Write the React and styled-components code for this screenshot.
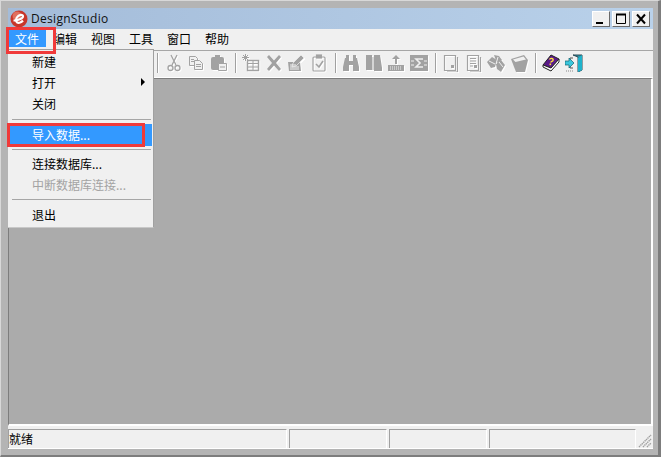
import React from "react";
import styled, { createGlobalStyle } from "styled-components";

const GlobalStyle = createGlobalStyle`
  html, body {
    margin: 0;
    padding: 0;
    background: #b4b4b4;
  }
  * {
    box-sizing: border-box;
  }
`;

const Window = styled.div`
  position: relative;
  width: 661px;
  height: 457px;
  display: flex;
  flex-direction: column;
  overflow: hidden;
  padding: 7px 5px 6px 7px;
  background: #b4b4b4;
  border-top: 1px solid #d8d8d8;
  border-left: 1px solid #d8d8d8;
  border-right: 3px solid #7d7d7d;
  border-bottom: 2px solid #7d7d7d;
  font-family: "Noto Sans CJK SC", "Liberation Sans", sans-serif;
  font-size: 12px;
  color: #000;
`;

const TitleBar = styled.div`
  height: 21px;
  flex: none;
  display: flex;
  align-items: center;
  padding: 0 3px 0 2px;
  background: linear-gradient(90deg, #a4bcd9, #b9d1ea);
`;

const TitleText = styled.span`
  margin-left: 3px;
  font-family: "Open Sans", sans-serif;
  font-size: 12px;
  letter-spacing: 0.3px;
  color: #111;
`;

const Controls = styled.div`
  margin-left: auto;
  display: flex;
  gap: 2px;
`;

const CtrlButton = styled.div`
  width: 18px;
  height: 16px;
  display: flex;
  align-items: center;
  justify-content: center;
  background: #f0f0f0;
  border: 1px solid;
  border-color: #fff #696969 #696969 #fff;
`;

const MenuBar = styled.div`
  height: 21px;
  flex: none;
  display: flex;
  padding-top: 1px;
  background: #f0f0f0;
`;

const MenuItem = styled.div`
  position: relative;
  width: 38px;
  height: 17px;
  line-height: 17px;
  text-align: center;
  background: ${(p) => (p.$active ? "#3399ff" : "transparent")};
  color: ${(p) => (p.$active ? "#fff" : "#000")};
`;

const RedMark = styled.div`
  position: absolute;
  z-index: 5;
  top: ${(p) => p.$top}px;
  left: ${(p) => p.$left}px;
  width: ${(p) => p.$w}px;
  height: ${(p) => p.$h}px;
  border: 3px solid #f03a3a;
`;

const Dropdown = styled.div`
  position: absolute;
  z-index: 3;
  top: 19px;
  left: 0;
  width: 146px;
  height: 179px;
  padding-top: 1px;
  display: flex;
  flex-direction: column;
  background: #f0f0f0;
  border-top: 1px solid #a0a0a0;
  border-right: 1px solid #a0a0a0;
  border-bottom: 1px solid #c8c8c8;
  color: #000;
  text-align: left;
`;

const DropItem = styled.div`
  position: relative;
  flex: none;
  height: ${(p) => p.$h || 21}px;
  line-height: ${(p) => p.$h || 21}px;
  padding-left: ${(p) => (p.$selected ? "22px" : "24px")};
  margin: ${(p) => (p.$selected ? "0 1px 0 2px" : "0")};
  background: ${(p) => (p.$selected ? "#3399ff" : "transparent")};
  color: ${(p) => (p.$selected ? "#fff" : p.$disabled ? "#a3a3a3" : "#000")};
`;

const Arrow = styled.span`
  position: absolute;
  right: 8px;
  top: 6px;
  width: 0;
  height: 0;
  border-left: 4px solid #000;
  border-top: 4px solid transparent;
  border-bottom: 4px solid transparent;
`;

const DropSep = styled.div`
  flex: none;
  height: 1px;
  margin: ${(p) => p.$top}px 2px ${(p) => p.$bottom}px 4px;
  background: #a6a6a6;
`;

const Toolbar = styled.div`
  height: 28px;
  flex: none;
  display: flex;
  align-items: center;
  padding-left: 149px;
  padding-bottom: 2px;
  background: #f0f0f0;
  border-top: 1px solid #a6a6a6;
  border-bottom: 1px solid #fff;
`;

const ToolSep = styled.div`
  width: 1px;
  height: 20px;
  flex: none;
  margin: 0 6.5px 0 ${(p) => p.$ml}px;
  background: #a0a0a0;
  box-shadow: 1px 0 0 #fff;
`;

const ToolIcon = styled.svg`
  width: 18px;
  height: 18px;
  flex: none;
  margin-right: 4.5px;
  filter: ${(p) => (p.$color ? "none" : "drop-shadow(1px 1px 0 #fff)")};
`;

const Client = styled.div`
  flex: 1;
  background: #ababab;
  border-top: 1px solid #7d7d7d;
  border-left: 1px solid #7d7d7d;
  border-right: 2px solid #fff;
  border-bottom: 2px solid #fff;
`;

const StatusBar = styled.div`
  height: 23px;
  flex: none;
  display: flex;
  gap: 2px;
  padding-top: 3px;
  position: relative;
  background: #f0f0f0;
  border-bottom: 1px solid #fff;
`;

const StatusPane = styled.div`
  flex: none;
  width: ${(p) => p.$w}px;
  height: 19px;
  line-height: 18px;
  font-size: 12px;
  border-top: 1px solid #a0a0a0;
  border-left: 1px solid #a0a0a0;
  border-right: 1px solid #fff;
`;

const Grip = styled.svg`
  position: absolute;
  right: 1px;
  bottom: 0;
  width: 14px;
  height: 14px;
`;

const G = "#a2a2a2";

const Logo = () => (
  <svg width="18" height="18" viewBox="0 0 18 18">
    <circle cx="9" cy="9" r="8.5" fill="#c8352a" />
    <circle cx="7" cy="6" r="4.5" fill="#e0705f" />
    <path d="M3.5 10.5C8 10.5 13 8.5 13 6.2C13 4.2 9 4.2 6.8 7.5C5 10.5 6.5 13.5 9.5 12.8C11 12.4 12 11.6 13 10.6" fill="none" stroke="#fff" strokeWidth="2.2" />
  </svg>
);

const icons = [
  // cut
  <g fill="none" stroke={G} strokeWidth="1.3"><path d="M6 1l5 10M12 1L7 11" /><circle cx="5.5" cy="14" r="2.5" /><circle cx="12.5" cy="14" r="2.5" /></g>,
  // copy
  <g fill="#f0f0f0" stroke={G}><path d="M2.5 2.5h6l2 2v7h-8z" /><path d="M7.5 6.5h5l3 3v6h-8z" /><path d="M9 10.5h5M9 12.5h5M4 5.5h3M4 7.5h3" /></g>,
  // paste
  <g><rect x="1" y="3" width="13" height="13" rx="2" fill={G} /><rect x="5" y="1" width="5" height="3" fill={G} /><path d="M8.5 9.5h8v7h-8z" fill="#f0f0f0" stroke={G} /><path d="M10 13h5" stroke={G} /></g>,
  "sep",
  // new table
  <g fill="none" stroke={G}><path d="M1 1l5 5M6 1L1 6M3.5 0v7M0 3.5h7" /><rect x="5.5" y="6.5" width="11" height="10" strokeWidth="1.4" /><path d="M6 9.5h10M11 7v9M6 13h10" /></g>,
  // delete
  <path d="M2 3l2-2 5 5.5L14 1l2 2-5 6 5 6-2 2-5-5.5L4 17l-2-2 5-6z" fill={G} />,
  // edit
  <g><path d="M1 8h12l1 9H2z" fill={G} /><path d="M6 9l8-8 3 3-8 8-4 1z" fill={G} stroke="#f0f0f0" strokeWidth=".7" /><path d="M3 11h6M3 13h9M3 15h9" stroke="#f0f0f0" /></g>,
  // clipboard check
  <g fill="none" stroke={G} strokeWidth="1.2"><rect x="3" y="3" width="12" height="14" rx="1" /><rect x="6.5" y="1" width="5" height="3" fill={G} /><path d="M6 10l3 3 4-6" strokeWidth="1.6" /></g>,
  "sep",
  // binoculars
  <g fill={G}><path d="M3 4h4v3h4V4h4l2 9v4h-6v-6H7v6H1v-4z" /><rect x="4" y="1" width="3" height="3" /><rect x="11" y="1" width="3" height="3" /></g>,
  // books
  <g fill={G}><path d="M1 1h6v15H1z" /><path d="M9 1h6l2 13v3H9z" /><path d="M7 3h2v13H7z" fill="#d5d5d5" /></g>,
  // upload keyboard
  <g fill={G}><path d="M9 1l4 4h-3v5H8V5H5z" /><path d="M1 11h16v6H1z" /><path d="M3 13h12M3 15h12" stroke="#f0f0f0" strokeDasharray="1 1" /></g>,
  // sum
  <g><rect x="0" y="1" width="18" height="16" fill={G} /><path d="M13 5H6l4 4-4 4h7" fill="none" stroke="#f0f0f0" strokeWidth="1.6" /><path d="M1 7h3M1 11h3M14 7h3M14 11h3" stroke="#f0f0f0" /></g>,
  "sep",
  // page
  <g fill="none" stroke={G} strokeWidth="1.2"><path d="M2.5 1.5h11v15h-11z" /><path d="M15.5 3v15H5" /><rect x="9" y="11" width="3" height="3" fill={G} stroke="none" /></g>,
  // text page
  <g fill="none" stroke={G} strokeWidth="1.2"><path d="M2.5 1.5h11v15h-11z" /><path d="M15.5 3v15H5" /><path d="M5 4.5h6M5 7h6M5 9.5h6M5 12h3" /><rect x="9" y="11" width="3" height="3" fill={G} stroke="none" /></g>,
  // cubes
  <g fill={G}><path d="M0 8l5-5 5 3-2 7-4 1z" /><path d="M7 1l5 1 3 4-5 3z" /><path d="M9 10l5-4 4 5-4 7-4-3z" /><path d="M2 7l6 3M11 3l-2 7M12 8l4 5" stroke="#f0f0f0" /></g>,
  // bucket
  <g fill={G}><path d="M1 5l13-4 4 5-3 12H6z" /><path d="M3 5.5l10.5-3 2.5 3-10.5 2.5z" fill="#f0f0f0" /></g>,
  "sep",
  // help book
  <g><path d="M1 11L9 1l8 4-8 9z" fill="#5b1a8a" stroke="#222" /><path d="M1 11v2l8 4 8-9V5l-8 9z" fill="#fff" stroke="#222" /><path d="M7.5 5.5c1-2 4.5-1 3.5 1-.5 1-2 1-2.3 2" fill="none" stroke="#ffe23a" strokeWidth="1.4" /><rect x="7.5" y="9.5" width="1.6" height="1.6" fill="#ffe23a" /></g>,
  // exit door
  <g><path d="M8 1h9v15l-4 2V3z" fill="#2a93a8" stroke="#2c4a55" /><path d="M13 4l4-3v15l-4 2z" fill="#1fb3cc" /><path d="M8 4H5v10h3" fill="none" stroke="#555" /><path d="M0 7h4V4l5 5-5 5v-3H0z" fill="#39c6dc" stroke="#14616e" strokeWidth=".7" /><path d="M1 17h7" stroke="#888" strokeDasharray="1 1" /></g>,
];

const Tool = ({ children, color }) => (
  <ToolIcon viewBox="0 0 18 18" $color={color}>
    {children}
  </ToolIcon>
);

export default function App() {
  return (
    <>
      <GlobalStyle />
      <Window>
        <TitleBar>
          <Logo />
          <TitleText>DesignStudio</TitleText>
          <Controls>
            <CtrlButton>
              <svg width="14" height="12" viewBox="0 0 14 12"><rect x="2" y="9" width="7" height="2" fill="#000" /></svg>
            </CtrlButton>
            <CtrlButton>
              <svg width="14" height="12" viewBox="0 0 14 12"><path d="M2.5 1.5h9v9h-9z" fill="none" stroke="#000" /><path d="M2 1.5h10" stroke="#000" strokeWidth="2" /></svg>
            </CtrlButton>
            <CtrlButton>
              <svg width="14" height="12" viewBox="0 0 14 12"><path d="M3 1.5l8 9M11 1.5l-8 9" stroke="#000" strokeWidth="2" /></svg>
            </CtrlButton>
          </Controls>
        </TitleBar>

        <MenuBar>
          <MenuItem $active>
            文件
            <RedMark $top={-3} $left={-2} $w={50} $h={27} />
            <Dropdown>
              <DropItem>新建</DropItem>
              <DropItem>
                打开
                <Arrow />
              </DropItem>
              <DropItem>关闭</DropItem>
              <DropSep $top={5} $bottom={4} />
              <DropItem $selected $h={22}>
                导入数据...
                <RedMark $top={-1} $left={-3} $w={138} $h={24} />
              </DropItem>
              <DropSep $top={3} $bottom={3} />
              <DropItem>连接数据库...</DropItem>
              <DropItem $disabled>中断数据库连接...</DropItem>
              <DropSep $top={4} $bottom={4} />
              <DropItem>退出</DropItem>
            </Dropdown>
          </MenuItem>
          <MenuItem>编辑</MenuItem>
          <MenuItem>视图</MenuItem>
          <MenuItem>工具</MenuItem>
          <MenuItem>窗口</MenuItem>
          <MenuItem>帮助</MenuItem>
        </MenuBar>

        <Toolbar>
          <ToolSep $ml={0} />
          {icons.map((icon, i) =>
            icon === "sep" ? (
              <ToolSep key={i} $ml={2.5} />
            ) : (
              <Tool key={i} color={i >= icons.length - 2}>
                {icon}
              </Tool>
            )
          )}
        </Toolbar>

        <Client />

        <StatusBar>
          <StatusPane $w={279}>就绪</StatusPane>
          <StatusPane $w={98} />
          <StatusPane $w={98} />
          <StatusPane $w={147} />
          <Grip viewBox="0 0 14 14">
            <path d="M1 13L13 1M5 13l8-8M9 13l4-4" stroke="#a0a0a0" strokeWidth="1.4" strokeDasharray="1.4 .6" />
          </Grip>
        </StatusBar>
      </Window>
    </>
  );
}
